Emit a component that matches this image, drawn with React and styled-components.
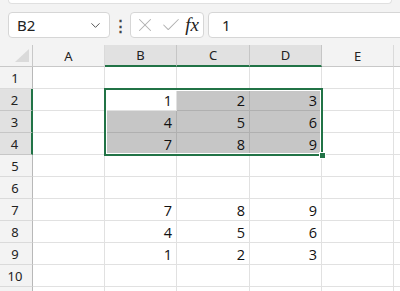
import React from 'react'
import styled, { createGlobalStyle } from 'styled-components'
import { ChevronDown, X, Check } from 'lucide-react'

const GlobalStyle = createGlobalStyle`
  html, body {
    margin: 0;
    padding: 0;
    background: #f3f3f3;
    overflow: hidden;
  }
  * { box-sizing: border-box; }
`

const cols = [
  { name: 'A', w: 72 },
  { name: 'B', w: 72 },
  { name: 'C', w: 73 },
  { name: 'D', w: 72 },
  { name: 'E', w: 72 },
  { name: '', w: 72 },
]
const ROW_HEAD = 33
const ROW_H = 22

const data = {
  2: { B: 1, C: 2, D: 3 },
  3: { B: 4, C: 5, D: 6 },
  4: { B: 7, C: 8, D: 9 },
  7: { B: 7, C: 8, D: 9 },
  8: { B: 4, C: 5, D: 6 },
  9: { B: 1, C: 2, D: 3 },
}

const selCols = ['B', 'C', 'D']
const selRows = [2, 3, 4]

const Page = styled.div`
  width: 400px;
  height: 291px;
  overflow: hidden;
  font-family: "Noto Sans", "Open Sans", sans-serif;
`

const RibbonEdge = styled.div`
  height: 4px;
  margin: 0 8px;
  background: #fff;
  border: 1px solid #e0e0e0;
  border-top: none;
  border-radius: 0 0 6px 6px;
`

const Toolbar = styled.div`
  display: flex;
  align-items: center;
  height: 41px;
  padding: 8px 0 7px 8px;
`

const NameBox = styled.div`
  display: flex;
  align-items: center;
  justify-content: space-between;
  width: 102px;
  height: 26px;
  padding: 0 6px 0 8px;
  background: #fff;
  border: 1px solid #d6d6d6;
  border-radius: 4px;
  font-size: 15px;
  color: #222;
`

const Dots = styled.div`
  width: 20px;
  display: flex;
  justify-content: center;
  font-size: 15px;
  font-weight: bold;
  color: #444;
`

const FxButtons = styled.div`
  display: flex;
  align-items: center;
  justify-content: space-between;
  width: 74px;
  height: 26px;
  padding: 0 4px 0 3px;
  background: #fff;
  border: 1px solid #d6d6d6;
  border-radius: 4px;
  color: #b0b0b0;
`

const FxLabel = styled.span`
  font-family: "Liberation Serif", "DejaVu Serif", serif;
  font-style: italic;
  font-size: 19px;
  line-height: 1;
  margin-top: -2px;
  color: #222;
`

const FormulaInput = styled.div`
  flex: 1;
  height: 26px;
  margin-left: 4px;
  margin-right: -10px;
  display: flex;
  align-items: center;
  padding-left: 13px;
  background: #fff;
  border: 1px solid #d6d6d6;
  border-radius: 4px;
  font-size: 15px;
  color: #222;
`

const SheetWrap = styled.div`
  position: relative;
  background: #fff;
`

const Grid = styled.div`
  display: grid;
  grid-template-columns: ${ROW_HEAD}px ${cols.map(c => c.w + 'px').join(' ')};
  grid-auto-rows: ${ROW_H}px;
`

const Corner = styled.div`
  position: relative;
  background: #f3f3f3;
  border-right: 1px solid #c8c8c8;
  border-bottom: 1px solid #c8c8c8;
  &::after {
    content: '';
    position: absolute;
    right: 3px;
    bottom: 4px;
    width: 0;
    height: 0;
    border-left: 14px solid transparent;
    border-bottom: 13px solid #dadada;
  }
`

const ColHead = styled.div`
  display: flex;
  align-items: center;
  justify-content: center;
  font-size: 13px;
  color: #222;
  background: ${p => (p.$sel ? '#e1e1e1' : '#f3f3f3')};
  border-right: 1px solid ${p => (p.$sel ? '#c6c6c6' : '#dadada')};
  border-bottom: ${p => (p.$sel ? '2px solid #217346' : '1px solid #c8c8c8')};
`

const RowHead = styled.div`
  display: flex;
  align-items: center;
  justify-content: center;
  font-size: 13px;
  color: #222;
  padding-right: 2px;
  background: ${p => (p.$sel ? '#e1e1e1' : '#f3f3f3')};
  border-right: ${p => (p.$sel ? '2px solid #217346' : '1px solid #b8b8b8')};
  border-bottom: 1px solid ${p => (p.$sel ? '#c6c6c6' : '#dadada')};
`

const Cell = styled.div`
  display: flex;
  align-items: center;
  justify-content: flex-end;
  padding: 1px 4px 0 0;
  font-family: "Open Sans", "Noto Sans", sans-serif;
  font-size: 14.5px;
  color: #111;
  background: ${p => (p.$fill ? '#c6c6c6' : '#fff')};
  border-right: 1px solid ${p => (p.$fill ? '#b0b0b0' : '#e1e1e1')};
  border-bottom: 1px solid ${p => (p.$fill ? '#b0b0b0' : '#e1e1e1')};
`

const Selection = styled.div`
  position: absolute;
  border: 2px solid #217346;
  box-shadow: inset 0 0 0 1px #fff;
  pointer-events: none;
`

const FillHandle = styled.div`
  position: absolute;
  right: -5px;
  bottom: -5px;
  width: 7px;
  height: 7px;
  background: #217346;
  border: 1px solid #fff;
`

export default function App() {
  const rows = Array.from({ length: 11 }, (_, i) => i + 1)
  const colX = {}
  let x = ROW_HEAD
  cols.forEach(c => {
    colX[c.name] = x
    x += c.w
  })
  const selLeft = colX.B - 1
  const selRight = colX.D + cols[3].w
  const selTop = ROW_H * 2 - 1

  return (
    <Page>
      <GlobalStyle />
      <RibbonEdge />
      <Toolbar>
        <NameBox>
          <span>B2</span>
          <ChevronDown size={15} color="#555" strokeWidth={1.6} />
        </NameBox>
        <Dots>⋮</Dots>
        <FxButtons>
          <X size={22} strokeWidth={1.1} />
          <Check size={22} strokeWidth={1.1} />
          <FxLabel>fx</FxLabel>
        </FxButtons>
        <FormulaInput>1</FormulaInput>
      </Toolbar>
      <SheetWrap>
        <Grid>
          <Corner />
          {cols.map((c, i) => (
            <ColHead key={i} $sel={selCols.includes(c.name)}>{c.name}</ColHead>
          ))}
          {rows.map(r => (
            <React.Fragment key={r}>
              <RowHead $sel={selRows.includes(r)}>{r <= 10 ? r : ''}</RowHead>
              {cols.map((c, i) => {
                const inSel = selRows.includes(r) && selCols.includes(c.name)
                const active = r === 2 && c.name === 'B'
                return (
                  <Cell key={i} $fill={inSel && !active}>
                    {data[r] && data[r][c.name]}
                  </Cell>
                )
              })}
            </React.Fragment>
          ))}
        </Grid>
        <Selection
          style={{
            left: selLeft,
            top: selTop,
            width: selRight - selLeft + 1,
            height: ROW_H * 3 + 2,
          }}
        >
          <FillHandle />
        </Selection>
      </SheetWrap>
    </Page>
  )
}
